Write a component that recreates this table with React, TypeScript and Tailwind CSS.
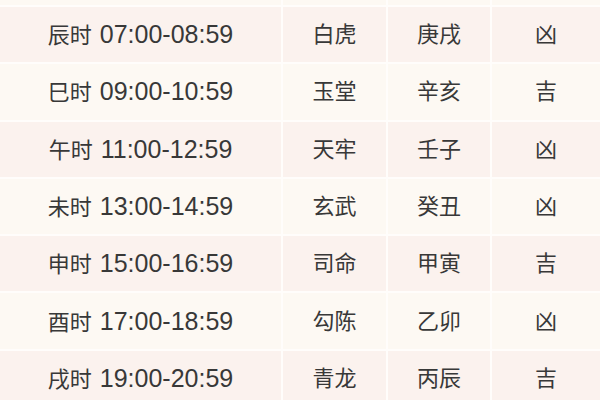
import React from "react";

const rows = [
  ["辰时", "07:00-08:59", "白虎", "庚戌", "凶"],
  ["巳时", "09:00-10:59", "玉堂", "辛亥", "吉"],
  ["午时", "11:00-12:59", "天牢", "壬子", "凶"],
  ["未时", "13:00-14:59", "玄武", "癸丑", "凶"],
  ["申时", "15:00-16:59", "司命", "甲寅", "吉"],
  ["酉时", "17:00-18:59", "勾陈", "乙卯", "凶"],
  ["戌时", "19:00-20:59", "青龙", "丙辰", "吉"],
];

const cjk = { fontFamily: '"Noto Sans CJK SC", sans-serif' };
const lat = { fontFamily: '"Liberation Sans", "Noto Sans CJK SC", sans-serif' };

export default function App() {
  return (
    <div className="w-[600px] h-[400px] overflow-hidden bg-[#fffdfb] flex flex-col gap-[2px] text-[#383838]">
      <div className="grid grid-cols-[281px_103px_102px_1fr] gap-x-[2px] h-[5px] shrink-0">
        <div className="bg-[#fdf9f3]" />
        <div className="bg-[#fdf9f3]" />
        <div className="bg-[#fdf9f3]" />
        <div className="bg-[#fdf9f3]" />
      </div>
      {rows.map((r, i) => {
        const bg = i % 2 === 0 ? "bg-[#fbf2ee]" : "bg-[#fdf9f3]";
        return (
          <div
            key={i}
            className="grid grid-cols-[281px_103px_102px_1fr] gap-x-[2px] h-[55.3px] shrink-0"
          >
            <div className={`${bg} flex items-center justify-center pb-[2px]`}>
              <div className="flex items-baseline gap-[8px] leading-[30px]">
                <span className="text-[22px]" style={cjk}>{r[0]}</span>
                <span className="text-[25px]" style={lat}>{r[1]}</span>
              </div>
            </div>
            {r.slice(2).map((c, j) => (
              <div key={j} className={`${bg} flex items-center justify-center pb-[5px]`}>
                <span className="text-[22px] leading-[30px]" style={cjk}>{c}</span>
              </div>
            ))}
          </div>
        );
      })}
    </div>
  );
}
